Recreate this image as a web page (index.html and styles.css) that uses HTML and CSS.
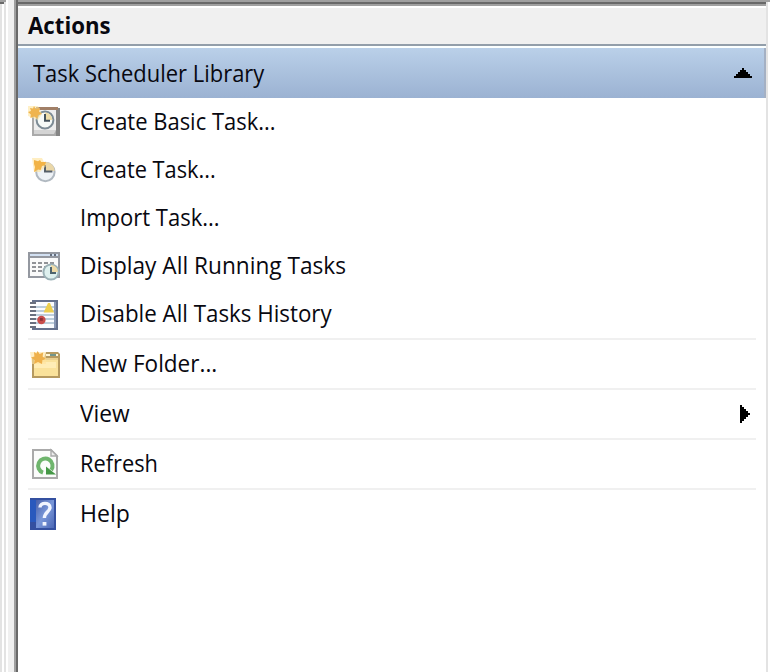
FILE: index.html
```html
<!DOCTYPE html>
<html lang="en">
<head>
<meta charset="utf-8">
<title>Actions</title>
<link rel="stylesheet" href="styles.css">
</head>
<body>
<div class="window">
  <div class="splitter"></div>
  <section class="panel">
    <header class="panel-title"><span class="label t-actions">Actions</span></header>
    <div class="group-title">
      <span class="label t-library">Task Scheduler Library</span>
      <svg class="arrow-up" viewBox="0 0 9 5" shape-rendering="crispEdges"><path d="M4 0h1v1h1v1h1v1h1v1h1v1H0V4h1V3h1V2h1V1h1z"/></svg>
    </div>
    <ul class="actions">
      <li>
        <svg class="icon" viewBox="0 0 16 16">
          <path fill="#858585" d="M3 1h13v14H3z"/><path fill="#a17f67" d="M4 0.5h11v1.5H4z"/><path fill="#aaa" d="M2 2h12v13H2z"/><path fill="#eee" d="M3 2h11v10H3z"/><path fill="#d4d4d4" d="M3 12h11l-1 2H3z"/>
          <circle cx="8.5" cy="7" r="4.2" fill="#f6faf8" stroke="#7d8c96"/><path fill="#eedda9" d="M8.5 7V3.3a3.7 3.7 0 0 1 3.7 3.7z"/><path d="M8.5 4v3.4H11" fill="none" stroke="#45535c"/>
          <path fill="#ffe6a0" opacity=".6" d="M0 0h5l2 4-2 3-5-2z"/><path fill="#efb44f" d="M3 0l.8 1.5L6 1l-.5 1.8L7 4l-2 .5L4.7 6.3 3 5.2 1.2 6l.2-1.8L0 3l1.5-.5L1 1l1.5.3z"/>
        </svg>
        <span class="label t-basic">Create Basic Task...</span>
      </li>
      <li>
        <svg class="icon" viewBox="0 0 16 16">
          <circle cx="8.7" cy="9" r="4.6" fill="#eef2f6" stroke="#b1b9c1"/><path fill="#ead7a8" d="M8.5 8.5V4c3 0 4.7 2 4.8 4.5z"/><path d="M8.5 5.5v3.2h3.7" fill="none" stroke="#555f69"/>
          <path fill="#ffe39a" opacity=".6" d="M2 2h5l2 4-3 3H3z"/><path fill="#f2b346" d="M3 3l2 .6L6 3l.6 1L9 4l-.5 1.6L7 6 6.3 8 5 7.7 3 9l.5-2.5L3 5z"/>
        </svg>
        <span class="label t-task">Create Task...</span>
      </li>
      <li><span class="icon"></span><span class="label t-import">Import Task...</span></li>
      <li>
        <svg class="icon" viewBox="0 0 16 16">
          <path fill="#9498a0" d="M0 1h16v13H0z"/><path fill="#d2e0f2" d="M1 2h14v1H1z"/><path fill="#646e7d" d="M11 2h1v1h-1zM13 2h1v1h-1z"/><path fill="#fafafa" d="M1 4h14v9H1z"/>
          <path d="M2 6.5h12M2 8.5h8M2 10.5h6" stroke="#919397" stroke-dasharray="2 1"/>
          <circle cx="11.5" cy="11" r="3.8" fill="#def0ee" stroke="#9bb1b6"/><path fill="#eedaa7" d="M11.5 11V7.5A3.5 3.5 0 0 1 15 11z"/><path d="M11.5 8.5v3H14" fill="none" stroke="#4e646d"/>
        </svg>
        <span class="label t-display">Display All Running Tasks</span>
      </li>
      <li>
        <svg class="icon" viewBox="0 0 16 16">
          <path fill="#65718d" d="M2 1h13v15H2z"/><path fill="#8998b5" d="M13 2h1v13h-1z"/><path fill="#fafcff" d="M3 2h10v13H3z"/><path d="M3 4.5h10M3 6.5h10M3 8.5h10M3 10.5h10M3 12.5h10" stroke="#a9bfd1" stroke-width=".8"/>
          <path d="M2 2v13" stroke="#fff" stroke-width="2"/><path d="M2.5 2v13" stroke="#6a7080" stroke-width="3" stroke-dasharray="1 1"/>
          <path fill="#edcf50" d="M10 2.5h1L13 7.3H7.8z"/><circle cx="6.7" cy="11" r="2.1" fill="#c84d4b"/><path fill="#8c3038" d="M6 10h1.4v1.4H6z"/>
        </svg>
        <span class="label t-disable">Disable All Tasks History</span>
      </li>
      <li class="divided">
        <svg class="icon" viewBox="0 0 16 16">
          <path fill="#b69a60" d="M2 5h6l1-3h6l1 1v12H2z"/><path fill="#fae29b" d="M3 6h12v8H3z"/><path fill="#ffedb6" d="M3 7h11v3H3z"/><path fill="#fff6d5" d="M9 3h6v1H9z"/><path fill="#72968c" d="M11 3h3v1h-3z"/><path fill="#ead090" d="M8 5h7v1H8z"/>
          <path fill="#ffe39d" opacity=".6" d="M1 2h8v6H2z"/><path fill="#eeb04b" d="M4.8 1.5l1 1.5 1.8-.7-.3 2L9 5.5 7.2 6 7 8l-2-1-2 1 .3-2L1.5 4.7l1.7-.5L3 2l1.2.7z"/>
        </svg>
        <span class="label t-folder">New Folder...</span>
      </li>
      <li class="divided">
        <span class="icon"></span><span class="label t-view">View</span>
        <svg class="arrow-right" viewBox="0 0 5 9" shape-rendering="crispEdges"><path d="M0 0h1v1h1v1h1v1h1v1h1v1H4v1H3v1H2v1H1v1H0z"/></svg>
      </li>
      <li class="divided">
        <svg class="icon" viewBox="0 0 16 16">
          <path fill="#fbfcfb" stroke="#aaa" d="M2.5 1h9l3 3v11h-12z"/><path fill="#eee" stroke="#aaa" stroke-width=".7" d="M11.5 1v3h3z"/>
          <path d="M7.5 12.3A3.6 3.6 0 1 1 11.6 11" fill="none" stroke="#6fb56d" stroke-width="2"/><path fill="#459846" d="M9 13.3V9.2l5 4.1z"/>
        </svg>
        <span class="label t-refresh">Refresh</span>
      </li>
      <li class="divided">
        <svg class="icon" viewBox="0 0 16 16">
          <defs><linearGradient id="book" x2="1" y2="1"><stop stop-color="#4860a9"/><stop offset=".5" stop-color="#7997d9"/><stop offset="1" stop-color="#4b67b5"/></linearGradient></defs>
          <path fill="#3450a0" d="M1 0h13v16H1z"/><path fill="url(#book)" d="M4 1h9v14H4z"/><path fill="#2959bd" d="M1 1h3v11H1z"/><path d="M6 4.8C6 2 11 2 11 4.8c0 2-2.8 2.3-2.8 5.2" fill="none" stroke="#f1f5ff" stroke-width="1.7"/><path fill="#f1f5ff" d="M7.3 12h1.9v1.8H7.3z"/>
        </svg>
        <span class="label t-help">Help</span>
      </li>
    </ul>
  </section>
  <div class="right-edge"></div>
</div>
</body>
</html>
```
FILE: styles.css
```css
* { box-sizing: border-box; }
body { margin: 0; background: #fff; color: #080810; font: 23.5px/48px "Open Sans", "Noto Sans", sans-serif; }
.window { display: flex; width: 770px; height: 672px; overflow: hidden; }
.splitter { width: 14px; background: linear-gradient(#a0a0a0, #a0a0a0) 0 0 / 6px 2px no-repeat, linear-gradient(#696969, #696969) 0 2px / 4px 2px no-repeat, linear-gradient(90deg, #e3e3e3 2px, #fff 2px 4px, #e3e3e3 4px 6px, #fff 6px 8px, #f0f0f0 8px); }
.panel { width: 752px; border-left: 4px solid #696969; border-image: linear-gradient(90deg, #a0a0a0 2px, #696969 2px) 0 0 0 4; }
.panel-title { height: 48px; padding-left: 10px; font-weight: 700; background: linear-gradient(#a0a0a0 2px, #696969 2px 4px, #a0a0a0 4px 6px, #fff 6px 8px, #f0f0f0 8px 44px, #929eaa 44px 46px, #fbffff 46px); }
.group-title { height: 50px; display: flex; align-items: center; justify-content: space-between; padding: 0 12px 0 15px; background: linear-gradient(#bad0e9, #9bb2d2); border-right: 2px solid #a4b0c3; }
.label { display: inline-block; white-space: nowrap; transform-origin: 0 50%; }
.actions { list-style: none; margin: 0; padding: 0 10px; }
.actions li { display: flex; align-items: center; height: 48px; }
.actions .divided { height: 50px; border-top: 2px solid #f0f0f0; }
.actions .label { padding-bottom: 2px; }
.icon { width: 32px; height: 32px; margin-right: 20px; flex: none; }
.arrow-up { width: 18px; height: 10px; flex: none; }
.arrow-right { width: 10px; height: 18px; margin: 0 6px 0 auto; }
.right-edge { width: 4px; background: linear-gradient(90deg, #e3e3e3 2px, #fff 2px); border-top: 2px solid #a0a0a0; }
.t-actions { transform: translateY(1px) scaleX(.945); }
.t-library { transform: scaleX(.934); }
.t-basic { transform: scaleX(.935); }
.t-task { transform: scaleX(.927); }
.t-import { transform: scaleX(.937); }
.t-display { transform: scaleX(.964); }
.t-disable { transform: scaleX(.95); }
.t-folder { transform: scaleX(.959); }
.t-view { transform: scaleX(.968); }
.t-refresh { transform: scaleX(.928); }
.t-help { transform: scaleX(.98); }
```
